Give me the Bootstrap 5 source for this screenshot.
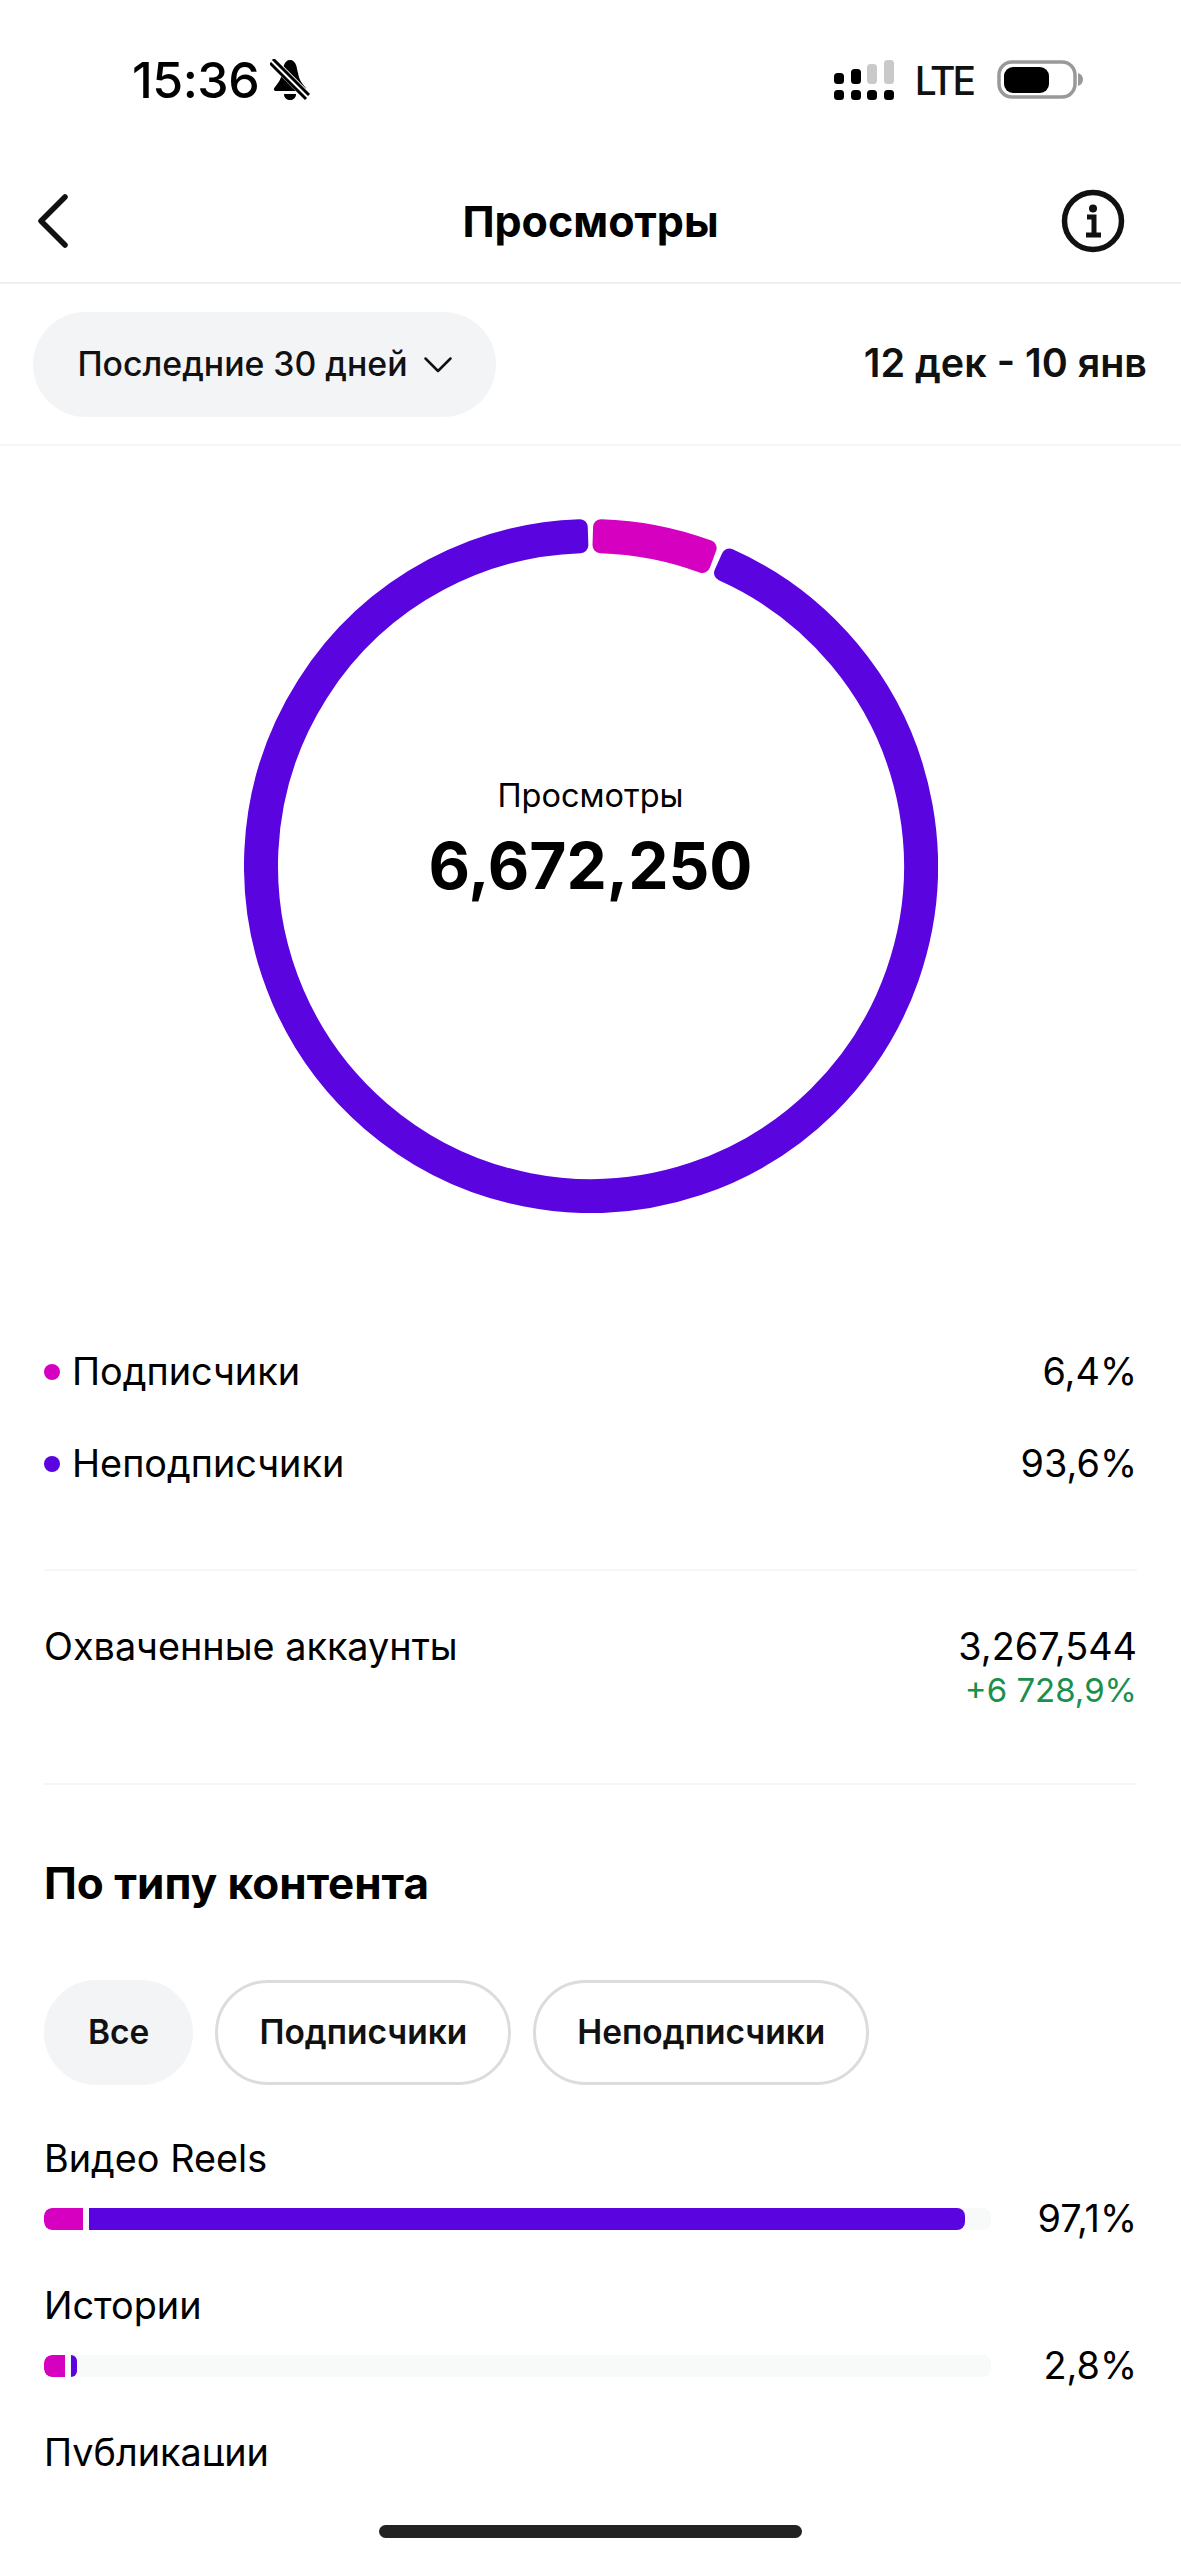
<!DOCTYPE html>
<html lang="ru">

<head>
    <meta charset="UTF-8">
    <title>Просмотры</title>
    <link href="https://cdn.jsdelivr.net/npm/bootstrap@5.3.3/dist/css/bootstrap.min.css" rel="stylesheet">
    <style>
        body { background: #fff; color: #000; font-family: Inter, "Noto Sans", sans-serif; }
        .screen { width: 1181px; height: 2560px; overflow: hidden; }

        /* status bar */
        .status-row { height: 160px; padding: 0 98px 0 132px; }
        .status-time { font-size: 50px; font-weight: 500; letter-spacing: -.5px; line-height: 1; }
        .bell-icon { margin-left: 3px; }
        .status-lte { font-size: 39px; font-weight: 500; letter-spacing: -3px; line-height: 1; margin: 0 24px 0 21px; color: #111; }

        /* header */
        .title-row { height: 124px; padding: 0 56px 0 37px; border-bottom: 2px solid #efefef; }
        .title-text { font-size: 43px; font-weight: 700; line-height: 1; }
        .filter-row { height: 162px; padding: 0 34px 0 33px; border-bottom: 2px solid #f6f6f6; }
        .period-pill { width: 463px; height: 105px; padding-top: 2px; background: #f3f4f6; font-size: 33.800px; font-weight: 500; border: 0; color: #111; }
        .date-range { font-size: 39.500px; font-weight: 600; color: #111; }

        /* donut */
        .donut-wrap { width: 694px; height: 694px; margin: 73px auto 0; }
        .donut-text { padding-bottom: 54px; }
        .donut-label { font-size: 32.500px; line-height: 1; margin-bottom: 21px; }
        .donut-value { font-size: 64px; font-weight: 700; line-height: 1; }

        /* lists */
        .info-block { padding: 0 44px 0 44px; }
        .info-text { font-size: 37.800px; line-height: 1; }
        .legend-top { height: 140px; }
        .legend-row { height: 92px; }
        .legend-dot { width: 16px; height: 16px; margin-right: 12px; }
        .dot-sub { background: #d500c0; }
        .dot-non { background: #5a04e0; }
        .soft-line { height: 2px; background: #f6f6f6; }
        .legend-end { margin-top: 32px; }
        .reach-row { height: 212px; padding-top: 57px; }
        .reach-delta { font-size: 33px; line-height: 1; color: #1a8f4e; margin-top: 8px; }
        .section-title { font-size: 44px; font-weight: 700; line-height: 1; margin: 76px 0 0; }

        /* chips */
        .chip-row { gap: 22px; margin-top: 75px; }
        .filter-chip { height: 105px; padding: 0 41px; font-size: 33.500px; font-weight: 600; color: #111; border: 3px solid #dcdcdc; background: #fff; }
        .filter-chip.chip-on { background: #f3f4f6; border-color: #f3f4f6; }

        /* bars, clipped by the home area like in the app */
        .bars-clip { height: 381px; padding-top: 6px; overflow: hidden; }
        .bar-name { height: 38px; margin-top: 49px; }
        .bar-row { height: 38px; margin-top: 22px; }
        .bar-track { width: 947px; height: 22px; background: #f8f9f9; border-radius: 8px; gap: 6px; overflow: hidden; }
        .bar-part { height: 22px; }
        .part-sub { background: #d500c0; border-radius: 8px 0 0 8px; }
        .part-non { background: #5a04e0; border-radius: 0 8px 8px 0; }
        .home-line { width: 423px; height: 13px; background: #222; margin: 59px auto 0; }
    </style>
</head>

<body>

    <div class="screen">

        <!-- status bar -->
        <div class="status-row d-flex justify-content-between align-items-center">
            <div class="d-flex align-items-center gap-2">
                <span class="status-time">15:36</span>
                <svg class="bell-icon" width="40" height="42" viewBox="0 0 40 42">
                    <path d="M20 1c-3 0-5 2-6 5-1 2-1 5-2 8-1 6-3 9-7 14-2 2-1 4 1 4h28c2 0 3-2 1-4-4-5-6-8-7-14-1-3-1-6-2-8-1-3-3-5-6-5z" fill="#000"/>
                    <path d="M14 35h12c0 4-3 6-6 6s-6-2-6-6z" fill="#000"/>
                    <path d="M1 1l37 37" stroke="#fff" stroke-width="9"/>
                    <path d="M3 0l36 36" stroke="#000" stroke-width="3"/>
                    <path d="M0 4l36 36" stroke="#000" stroke-width="3"/>
                </svg>
            </div>
            <div class="d-flex align-items-center">
                <svg width="60" height="40" viewBox="0 0 60 40">
                    <rect x="0" y="13" width="10" height="11" rx="3.5" fill="#000"/>
                    <rect x="17" y="9" width="10" height="15" rx="3.5" fill="#000"/>
                    <rect x="33" y="4" width="10" height="20" rx="3.5" fill="#c9c9c9"/>
                    <rect x="50" y="0" width="10" height="24" rx="3.5" fill="#c9c9c9"/>
                    <rect x="0" y="30" width="10" height="10" rx="3.5" fill="#000"/>
                    <rect x="17" y="30" width="10" height="10" rx="3.5" fill="#000"/>
                    <rect x="33" y="30" width="10" height="10" rx="3.5" fill="#000"/>
                    <rect x="50" y="30" width="10" height="10" rx="3.5" fill="#000"/>
                </svg>
                <span class="status-lte">LTE</span>
                <svg width="86" height="40" viewBox="0 0 86 40">
                    <rect x="2" y="2" width="76" height="35" rx="13" fill="none" stroke="#999" stroke-width="3.5"/>
                    <rect x="7" y="7" width="45" height="26" rx="9" fill="#000"/>
                    <path d="M81 13c3 1 5 3 5 6.500s-2 5.500-5 6.500z" fill="#999"/>
                </svg>
            </div>
        </div>

        <!-- header -->
        <div class="title-row d-flex justify-content-between align-items-center position-relative">
            <svg width="32" height="54" viewBox="0 0 32 54">
                <path d="M28 3L4 27l24 24" fill="none" stroke="#111" stroke-width="5.500" stroke-linecap="round" stroke-linejoin="round"/>
            </svg>
            <span class="title-text position-absolute start-50 translate-middle-x">Просмотры</span>
            <svg width="64" height="64" viewBox="0 0 64 64">
                <circle cx="32" cy="32" r="28.500" fill="none" stroke="#111" stroke-width="5.500"/>
                <circle cx="32" cy="19.500" r="4" fill="#111"/>
                <path d="M26 28h7v17M25 46h15" fill="none" stroke="#111" stroke-width="5"/>
            </svg>
        </div>

        <div class="filter-row d-flex justify-content-between align-items-center">
            <button type="button" class="period-pill rounded-pill d-flex justify-content-center align-items-center gap-3">
                Последние 30 дней
                <svg width="28" height="16" viewBox="0 0 28 16">
                    <path d="M1.500 1.500L14 14 26.500 1.500" fill="none" stroke="#111" stroke-width="2.500" stroke-linecap="round" stroke-linejoin="round"/>
                </svg>
            </button>
            <span class="date-range">12 дек - 10 янв</span>
        </div>

        <!-- donut -->
        <div class="donut-wrap position-relative">
            <svg width="694" height="694" viewBox="0 0 694 694">
                <path id="arcNon" fill="#5a04e0" stroke="#5a04e0" stroke-width="16" stroke-linejoin="round"/>
                <path id="arcSub" fill="#d500c0" stroke="#d500c0" stroke-width="16" stroke-linejoin="round"/>
            </svg>
            <div class="donut-text position-absolute top-50 start-50 translate-middle text-center text-nowrap">
                <div class="donut-label">Просмотры</div>
                <div class="donut-value">6,672,250</div>
            </div>
        </div>

        <div class="info-block">
            <div class="legend-top"></div>

            <div class="legend-row d-flex justify-content-between info-text">
                <div class="d-flex align-items-center align-self-start"><span class="legend-dot dot-sub rounded-circle"></span>Подписчики</div>
                <span>6,4%</span>
            </div>
            <div class="legend-row d-flex justify-content-between info-text">
                <div class="d-flex align-items-center align-self-start"><span class="legend-dot dot-non rounded-circle"></span>Неподписчики</div>
                <span>93,6%</span>
            </div>

            <div class="soft-line legend-end"></div>

            <div class="reach-row d-flex justify-content-between info-text">
                <span>Охваченные аккаунты</span>
                <div class="text-end">
                    <div>3,267,544</div>
                    <div class="reach-delta">+6 728,9%</div>
                </div>
            </div>

            <div class="soft-line"></div>

            <h2 class="section-title">По типу контента</h2>

            <div class="chip-row d-flex">
                <button type="button" class="filter-chip chip-on rounded-pill">Все</button>
                <button type="button" class="filter-chip rounded-pill">Подписчики</button>
                <button type="button" class="filter-chip rounded-pill">Неподписчики</button>
            </div>

            <div class="bars-clip">
                <div class="bar-name info-text">Видео Reels</div>
                <div class="bar-row d-flex justify-content-between align-items-center info-text">
                    <div class="bar-track d-flex">
                        <div class="bar-part part-sub" style="width: 39px"></div>
                        <div class="bar-part part-non" style="width: 876px"></div>
                    </div>
                    <span>97,1%</span>
                </div>
                <div class="bar-name info-text">Истории</div>
                <div class="bar-row d-flex justify-content-between align-items-center info-text">
                    <div class="bar-track d-flex">
                        <div class="bar-part part-sub" style="width: 21px"></div>
                        <div class="bar-part part-non" style="width: 6px"></div>
                    </div>
                    <span>2,8%</span>
                </div>
                <div class="bar-name info-text">Публикации</div>
            </div>
        </div>

        <div class="home-line rounded-pill"></div>
    </div>

    <script src="https://cdn.jsdelivr.net/npm/bootstrap@5.3.3/dist/js/bootstrap.bundle.min.js"></script>

    <script>
        // ring segments: angles in degrees, clockwise from the top
        const punto = (r, a) => {
            const rad = a * Math.PI / 180;
            return `${(347 + r * Math.sin(rad)).toFixed(2)} ${(347 - r * Math.cos(rad)).toFixed(2)}`;
        };

        const sector = (desde, hasta) => {
            const grande = hasta - desde > 180 ? 1 : 0;
            return `M${punto(339, desde)} A339 339 0 ${grande} 1 ${punto(339, hasta)} L${punto(321, hasta)} A321 321 0 ${grande} 0 ${punto(321, desde)} Z`;
        };

        document.getElementById('arcSub').setAttribute('d', sector(1.7, 20.3));
        document.getElementById('arcNon').setAttribute('d', sector(24.1, 358.1));
    </script>

</body>

</html>
